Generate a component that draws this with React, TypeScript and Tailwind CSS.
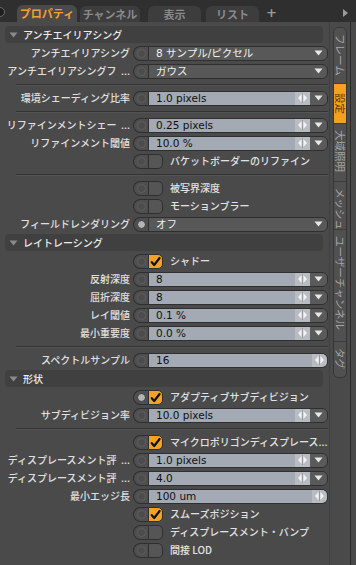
import React from "react";

const JP = "font-['Noto_Sans_CJK_JP','Noto_Sans_CJK_SC',sans-serif]";
const LAT = "font-['DejaVu_Sans','Noto_Sans_CJK_JP',sans-serif]";

const DownTri = ({ color = "#e8e8e8" }: { color?: string }) => (
  <svg width="9" height="6" viewBox="0 0 9 6">
    <path d="M0.5 0.5 H8.5 L4.5 5.5 Z" fill={color} />
  </svg>
);

const Arrows = () => (
  <svg width="11" height="10" viewBox="0 0 11 10">
    <path d="M4.6 1 L1 5 L4.6 9 Z" fill="#f2f2f2" />
    <path d="M6.4 1 L10 5 L6.4 9 Z" fill="#f2f2f2" />
    <rect x="5.1" y="0" width="0.8" height="10" fill="#8c9197" />
  </svg>
);

const Check = () => (
  <svg width="11" height="11" viewBox="0 0 11 11">
    <path d="M1.8 6.2 L4.2 9 L9.6 2" fill="none" stroke="#111" strokeWidth="2.2" strokeLinecap="round" strokeLinejoin="round" />
  </svg>
);

function Toggle({ filled }: { filled?: boolean }) {
  return (
    <div className="h-[15px] w-[15px] shrink-0 rounded-l-full bg-[#4f4f4f] border border-[#2f2f2f] border-r-0 flex items-center justify-center">
      <div
        className={
          filled
            ? "h-[9px] w-[9px] rounded-full bg-[#b4b4b4] border border-[#3a3a3a]"
            : "h-[9px] w-[9px] rounded-full bg-[#4c4c4c] border border-[#5e5e5e]"
        }
      />
    </div>
  );
}

function Label({ text }: { text: string }) {
  return (
    <div className={`w-[133px] shrink-0 pr-[3px] text-right whitespace-pre text-[10px] leading-none font-medium text-[#e0e0e0] ${JP}`}>
      {text}
    </div>
  );
}

type RowDef =
  | { t: "drop"; label: string; value: string; filled?: boolean }
  | { t: "val"; label: string; value: string }
  | { t: "valnd"; label: string; value: string }
  | { t: "check"; label: string; checked?: boolean; filled?: boolean }
  | { t: "sep" }
  | { t: "head"; label: string };

function Row({ r }: { r: RowDef }) {
  if (r.t === "sep") {
    return (
      <div className="h-[9px] flex items-center pl-[16px]">
        <div className="w-full h-[2px] border-t border-[#333333] border-b border-b-[#545454]" />
      </div>
    );
  }
  if (r.t === "head") {
    return (
      <div className="h-[19px] flex items-center px-[5px]">
        <div className="w-full h-[17px] rounded-[4px] bg-[#404040] flex items-center pl-[4px] gap-[5px]">
          <DownTri color="#8a8a8a" />
          <span className={`text-[10px] leading-none text-[#ececec] font-medium ${JP}`}>{r.label}</span>
        </div>
      </div>
    );
  }
  if (r.t === "check") {
    return (
      <div className="h-[18px] flex items-center">
        <div className="w-[133px] shrink-0" />
        <Toggle filled={r.filled} />
        <div
          className={
            r.checked
              ? "h-[15px] w-[15px] shrink-0 rounded-r-[5px] bg-[#f2a226] border border-[#2f2f2f] flex items-center justify-center"
              : "h-[15px] w-[15px] shrink-0 rounded-r-[5px] bg-[#555555] border border-[#2f2f2f]"
          }
        >
          {r.checked && <Check />}
        </div>
        <span className={`ml-[7px] whitespace-nowrap text-[10px] leading-none font-medium text-[#e2e2e2] ${JP}`}>{r.label}</span>
      </div>
    );
  }
  if (r.t === "drop") {
    return (
      <div className="h-[18px] flex items-center">
        <Label text={r.label} />
        <Toggle filled={r.filled} />
        <div className={`flex-1 h-[15px] rounded-r-[6px] bg-[#585858] border border-[#2f2f2f] flex items-center justify-between pl-[7px] pr-[4px] text-[10.5px] leading-none text-[#f0f0f0] ${LAT}`}>
          <span>{r.value}</span>
          <DownTri />
        </div>
      </div>
    );
  }
  if (r.t === "val") {
    return (
      <div className="h-[18px] flex items-center">
        <Label text={r.label} />
        <Toggle />
        <div className="flex-1 h-[15px] rounded-r-[6px] border border-[#2f2f2f] flex overflow-hidden">
          <div className={`flex-1 bg-[#a3aab3] flex items-center pl-[7px] text-[10.5px] leading-none text-[#111] ${LAT}`}>{r.value}</div>
          <div className="w-[15px] bg-[#b9bdc3] flex items-center justify-center">
            <Arrows />
          </div>
          <div className="w-[17px] bg-[#5a5a5a] flex items-center justify-center">
            <DownTri />
          </div>
        </div>
      </div>
    );
  }
  return (
    <div className="h-[18px] flex items-center">
      <Label text={r.label} />
      <Toggle />
      <div className="flex-1 h-[15px] rounded-r-[6px] border border-[#2f2f2f] flex overflow-hidden">
        <div className={`flex-1 bg-[#a3aab3] flex items-center pl-[7px] text-[10.5px] leading-none text-[#111] ${LAT}`}>{r.value}</div>
        <div className="w-[15px] bg-[#b9bdc3] flex items-center justify-center">
          <Arrows />
        </div>
      </div>
    </div>
  );
}

const rows: RowDef[] = [
  { t: "head", label: "アンチエイリアシング" },
  { t: "drop", label: "アンチエイリアシング", value: "8 サンプル/ピクセル" },
  { t: "drop", label: "アンチエイリアシングフ  ...", value: "ガウス" },
  { t: "sep" },
  { t: "val", label: "環境シェーディング比率", value: "1.0 pixels" },
  { t: "sep" },
  { t: "val", label: "リファインメントシェー  ...", value: "0.25 pixels" },
  { t: "val", label: "リファインメント閾値", value: "10.0 %" },
  { t: "check", label: "バケットボーダーのリファイン" },
  { t: "sep" },
  { t: "check", label: "被写界深度" },
  { t: "check", label: "モーションブラー" },
  { t: "drop", label: "フィールドレンダリング", value: "オフ", filled: true },
  { t: "head", label: "レイトレーシング" },
  { t: "check", label: "シャドー", checked: true },
  { t: "val", label: "反射深度", value: "8" },
  { t: "val", label: "屈折深度", value: "8" },
  { t: "val", label: "レイ閾値", value: "0.1 %" },
  { t: "val", label: "最小重要度", value: "0.0 %" },
  { t: "sep" },
  { t: "valnd", label: "スペクトルサンプル", value: "16" },
  { t: "head", label: "形状" },
  { t: "check", label: "アダプティブサブディビジョン", checked: true, filled: true },
  { t: "val", label: "サブディビジョン率", value: "10.0 pixels" },
  { t: "sep" },
  { t: "check", label: "マイクロポリゴンディスプレース...", checked: true },
  { t: "val", label: "ディスプレースメント評  ...", value: "1.0 pixels" },
  { t: "val", label: "ディスプレースメント評  ...", value: "4.0" },
  { t: "valnd", label: "最小エッジ長", value: "100 um" },
  { t: "check", label: "スムーズポジション", checked: true },
  { t: "check", label: "ディスプレースメント・バンプ" },
  { t: "check", label: "間接 LOD" },
];

const vtabs: { label: string; h: number; active?: boolean }[] = [
  { label: "フレーム", h: 55 },
  { label: "設定", h: 40, active: true },
  { label: "大域照明", h: 58 },
  { label: "メッシュ", h: 48 },
  { label: "ユーザーチャンネル", h: 112 },
  { label: "タグ", h: 36 },
];

export default function App() {
  return (
    <div className="w-[356px] h-[565px] bg-[#4a4a4a] overflow-hidden flex flex-col select-none">
      <div className="h-[22px] shrink-0 bg-[#2f2f2f] flex items-end relative">
        <div className="absolute left-[-5px] top-[7px] h-[10px] w-[10px] rounded-full bg-[#1e1e1e] border border-[#6a6a6a]" />
        <div className="ml-[17px] flex items-end gap-[3px]">
          <div className={`h-[17px] w-[60px] rounded-t-[6px] bg-[#4a4a4a] flex items-center justify-center text-[11px] font-bold text-[#f0a030] ${JP}`}>
            プロパティ
          </div>
          <div className={`h-[16px] w-[60px] rounded-t-[6px] bg-[#3d3d3d] flex items-center justify-center text-[11px] font-bold text-[#8a8a8a] ${JP}`}>
            チャンネル
          </div>
          <div className={`ml-[5px] h-[16px] w-[53px] rounded-t-[6px] bg-[#3d3d3d] flex items-center justify-center text-[11px] font-bold text-[#8a8a8a] ${JP}`}>
            表示
          </div>
          <div className={`ml-[2px] h-[16px] w-[53px] rounded-t-[6px] bg-[#3d3d3d] flex items-center justify-center text-[11px] font-bold text-[#8a8a8a] ${JP}`}>
            リスト
          </div>
        </div>
        <div className={`ml-[7px] mb-[3px] text-[13px] font-bold leading-none text-[#9a9a9a] ${LAT}`}>+</div>
        <div className="ml-auto mr-[8px] mb-[5px]">
          <svg width="5" height="8" viewBox="0 0 5 8">
            <path d="M0 0 L5 4 L0 8 Z" fill="#9a9a9a" />
          </svg>
        </div>
      </div>

      <div className="flex-1 flex">
        <div className="w-[329px] shrink-0 pt-[3px] pr-[1px]">
          {rows.map((r, i) => (
            <Row key={i} r={r} />
          ))}
        </div>
        <div className="w-[22px] shrink-0 border-l border-l-[#404040] border-r border-[#2a2a2a] pt-[5px] pl-[3px]">
          <div className="w-[14px] rounded-[5px] border border-[#363636] bg-[#505050] overflow-hidden flex flex-col">
            {vtabs.map((t, i) => (
              <div
                key={t.label}
                style={{ height: t.h }}
                className={`${i > 0 ? "border-t border-[#3c3c3c]" : ""} ${
                  t.active ? "bg-[#f5a020] justify-center" : "justify-start pt-[6px]"
                } flex flex-col items-center`}
              >
                <span
                  className={`[writing-mode:vertical-rl] [text-orientation:sideways] text-[10.5px] leading-none whitespace-nowrap ${
                    t.active ? "text-[#5a3a08]" : "text-[#a6a6a6]"
                  } ${JP}`}
                >
                  {t.label}
                </span>
              </div>
            ))}
          </div>
        </div>
        <div className="flex-1" />
      </div>
    </div>
  );
}
